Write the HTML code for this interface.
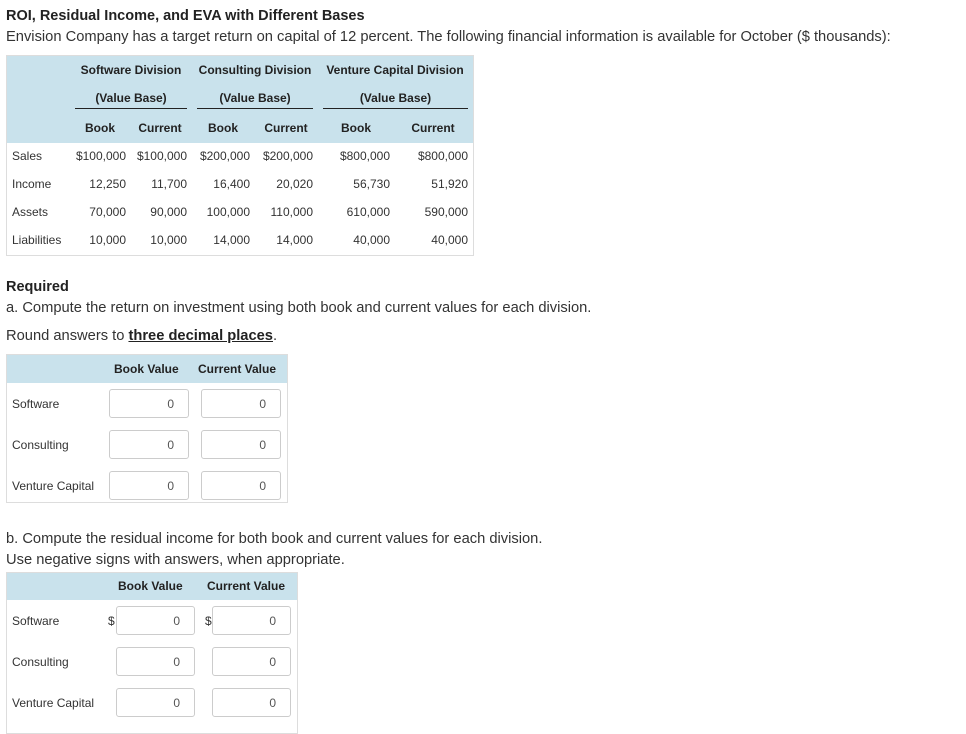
<!DOCTYPE html>
<html><head><meta charset="utf-8"><style>
body{margin:0;background:#fff;font-family:"Liberation Sans",sans-serif;color:#333;width:966px;height:721px;position:relative;overflow:hidden}
.a{position:absolute;white-space:nowrap}
.t{font-size:14.7px}
.s{font-size:12px}
.b{font-weight:bold;color:#222}
.box{position:absolute;border:1px solid #ddd;background:#fff}
.hd{position:absolute;background:#c9e2ec}
.r{text-align:right}
.c{text-align:center}
.ul{position:absolute;height:1px;background:#222}
.in{position:absolute;width:78px;height:29px;border:1px solid #ccc;border-radius:3px;background:#fff;font-size:12px;text-align:right;box-sizing:border-box;padding-right:14px;line-height:28px;color:#555}
</style></head><body>
<div class="a t b" style="left:6px;top:8px;font-size:14.5px">ROI, Residual Income, and EVA with Different Bases</div>
<div class="a t" style="left:6px;top:29px">Envision Company has a target return on capital of 12 percent. The following financial information is available for October ($ thousands):</div>

<div class="box" style="left:6px;top:55px;width:466px;height:199px"></div>
<div class="hd" style="left:7px;top:56px;width:466px;height:87px"></div>
<div class="a s b c" style="left:75px;top:63px;width:112px">Software Division</div>
<div class="a s b c" style="left:195px;top:63px;width:120px">Consulting Division</div>
<div class="a s b c" style="left:320px;top:63px;width:150px">Venture Capital Division</div>
<div class="a s b c" style="left:75px;top:91px;width:112px">(Value Base)</div>
<div class="a s b c" style="left:197px;top:91px;width:116px">(Value Base)</div>
<div class="a s b c" style="left:323px;top:91px;width:145px">(Value Base)</div>
<div class="ul" style="left:75px;top:108px;width:112px"></div>
<div class="ul" style="left:197px;top:108px;width:116px"></div>
<div class="ul" style="left:323px;top:108px;width:145px"></div>
<div class="a s b c" style="left:80px;top:121px;width:40px">Book</div>
<div class="a s b c" style="left:135px;top:121px;width:50px">Current</div>
<div class="a s b c" style="left:203px;top:121px;width:40px">Book</div>
<div class="a s b c" style="left:261px;top:121px;width:50px">Current</div>
<div class="a s b c" style="left:336px;top:121px;width:40px">Book</div>
<div class="a s b c" style="left:408px;top:121px;width:50px">Current</div>

<div class="a s" style="left:12px;top:149px">Sales</div>
<div class="a s" style="left:12px;top:177px">Income</div>
<div class="a s" style="left:12px;top:205px">Assets</div>
<div class="a s" style="left:12px;top:233px">Liabilities</div>
<div class="a s r" style="left:56px;top:149px;width:70px">$100,000</div>
<div class="a s r" style="left:117px;top:149px;width:70px">$100,000</div>
<div class="a s r" style="left:180px;top:149px;width:70px">$200,000</div>
<div class="a s r" style="left:243px;top:149px;width:70px">$200,000</div>
<div class="a s r" style="left:320px;top:149px;width:70px">$800,000</div>
<div class="a s r" style="left:398px;top:149px;width:70px">$800,000</div>
<div class="a s r" style="left:56px;top:177px;width:70px">12,250</div>
<div class="a s r" style="left:117px;top:177px;width:70px">11,700</div>
<div class="a s r" style="left:180px;top:177px;width:70px">16,400</div>
<div class="a s r" style="left:243px;top:177px;width:70px">20,020</div>
<div class="a s r" style="left:320px;top:177px;width:70px">56,730</div>
<div class="a s r" style="left:398px;top:177px;width:70px">51,920</div>
<div class="a s r" style="left:56px;top:205px;width:70px">70,000</div>
<div class="a s r" style="left:117px;top:205px;width:70px">90,000</div>
<div class="a s r" style="left:180px;top:205px;width:70px">100,000</div>
<div class="a s r" style="left:243px;top:205px;width:70px">110,000</div>
<div class="a s r" style="left:320px;top:205px;width:70px">610,000</div>
<div class="a s r" style="left:398px;top:205px;width:70px">590,000</div>
<div class="a s r" style="left:56px;top:233px;width:70px">10,000</div>
<div class="a s r" style="left:117px;top:233px;width:70px">10,000</div>
<div class="a s r" style="left:180px;top:233px;width:70px">14,000</div>
<div class="a s r" style="left:243px;top:233px;width:70px">14,000</div>
<div class="a s r" style="left:320px;top:233px;width:70px">40,000</div>
<div class="a s r" style="left:398px;top:233px;width:70px">40,000</div>

<div class="a t b" style="left:6px;top:279px;font-size:14.5px">Required</div>
<div class="a t" style="left:6px;top:300px">a. Compute the return on investment using both book and current values for each division.</div>
<div class="a t" style="left:6px;top:328px">Round answers to <b style="color:#222;text-decoration:underline">three decimal places</b>.</div>

<div class="box" style="left:6px;top:354px;width:280px;height:147px"></div>
<div class="hd" style="left:7px;top:355px;width:280px;height:28px"></div>
<div class="a s b" style="left:114px;top:362px">Book Value</div>
<div class="a s b" style="left:198px;top:362px">Current Value</div>
<div class="a s" style="left:12px;top:397px">Software</div>
<div class="a s" style="left:12px;top:438px">Consulting</div>
<div class="a s" style="left:12px;top:479px">Venture Capital</div>
<div class="in" style="left:109px;top:389px;width:80px">0</div>
<div class="in" style="left:201px;top:389px;width:80px">0</div>
<div class="in" style="left:109px;top:430px;width:80px">0</div>
<div class="in" style="left:201px;top:430px;width:80px">0</div>
<div class="in" style="left:109px;top:471px;width:80px">0</div>
<div class="in" style="left:201px;top:471px;width:80px">0</div>

<div class="a t" style="left:6px;top:531px">b. Compute the residual income for both book and current values for each division.</div>
<div class="a t" style="left:6px;top:552px">Use negative signs with answers, when appropriate.</div>

<div class="box" style="left:6px;top:572px;width:290px;height:160px"></div>
<div class="hd" style="left:7px;top:573px;width:290px;height:27px"></div>
<div class="a s b" style="left:118px;top:579px">Book Value</div>
<div class="a s b" style="left:207px;top:579px">Current Value</div>
<div class="a s" style="left:12px;top:614px">Software</div>
<div class="a s" style="left:12px;top:655px">Consulting</div>
<div class="a s" style="left:12px;top:696px">Venture Capital</div>
<div class="a s" style="left:108px;top:614px">$</div>
<div class="a s" style="left:205px;top:614px">$</div>
<div class="in" style="left:116px;top:606px;width:79px">0</div>
<div class="in" style="left:212px;top:606px;width:79px">0</div>
<div class="in" style="left:116px;top:647px;width:79px">0</div>
<div class="in" style="left:212px;top:647px;width:79px">0</div>
<div class="in" style="left:116px;top:688px;width:79px">0</div>
<div class="in" style="left:212px;top:688px;width:79px">0</div>
</body></html>
